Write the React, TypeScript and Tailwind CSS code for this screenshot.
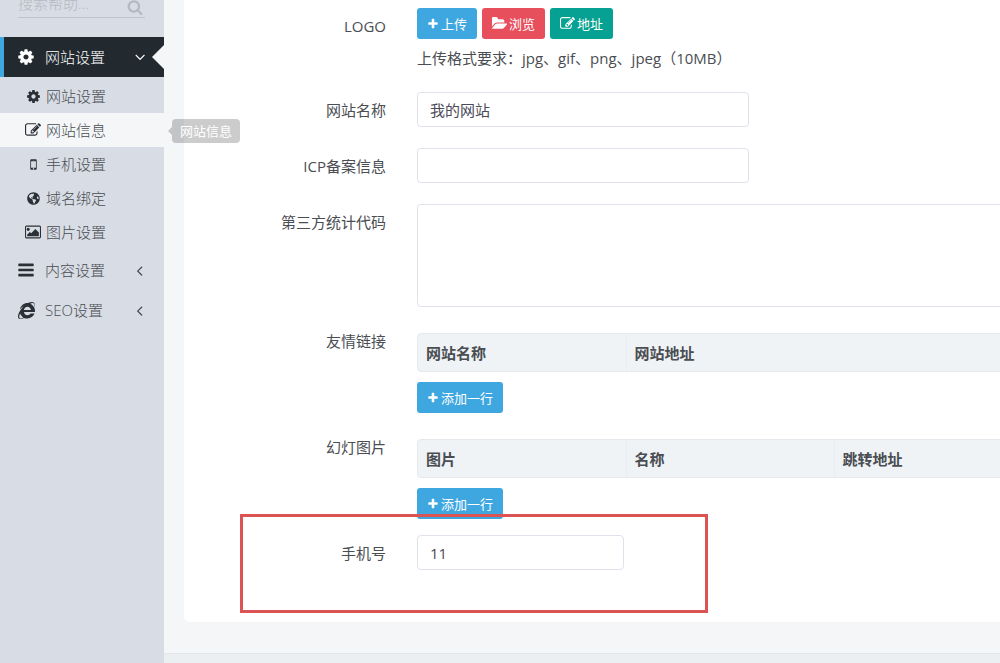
import { useState } from "react";
import type { ReactNode } from "react";
import { FaGlobeAmericas, FaInternetExplorer } from "react-icons/fa";
import clsx from "clsx";

const ICONS = {
  cog: "M1152 896q0-106-75-181t-181-75-181 75-75 181 75 181 181 75 181-75 75-181zm512-109v222q0 12-8 23t-20 13l-185 28q-19 54-39 91 35 50 107 138 10 12 10 25t-9 23q-27 37-99 108t-94 71q-12 0-26-9l-138-108q-44 23-91 38-16 136-29 186-7 28-36 28h-222q-14 0-24.5-8.5t-11.5-21.5l-28-184q-49-16-90-37l-141 107q-10 9-25 9-14 0-25-11-126-114-165-168-7-10-7-23 0-12 8-23 15-21 51-66.5t54-70.5q-27-50-41-99l-183-27q-13-2-21-12.5t-8-23.5v-222q0-12 8-23t19-13l186-28q14-46 39-92-40-57-107-138-10-12-10-24 0-10 9-23 26-36 98.5-107.5t94.5-71.5q13 0 26 10l138 107q44-23 91-38 16-136 29-186 7-28 36-28h222q14 0 24.5 8.5t11.5 21.5l28 184q49 16 90 37l142-107q9-9 24-9 13 0 25 10 129 119 165 170 7 8 7 22 0 12-8 23-15 21-51 66.5t-54 70.5q26 50 41 98l183 28q13 2 21 12.5t8 23.5z",
  edit: "M888 1184l116-116-152-152-116 116v56h96v96h56zm440-720q-16-16-33 1l-350 350q-17 17-1 33t33-1l350-350q17-17 1-33zm80 594v190q0 119-84.5 203.5t-203.5 84.5h-832q-119 0-203.5-84.5t-84.5-203.5v-832q0-119 84.5-203.5t203.5-84.5h832q63 0 117 25 15 7 18 23 3 17-9 29l-49 49q-14 14-32 8-23-6-45-6h-832q-66 0-113 47t-47 113v832q0 66 47 113t113 47h832q66 0 113-47t47-113v-126q0-13 9-22l64-64q15-15 35-7t20 29zm-96-738l288 288-672 672h-288v-288zm444 132l-92 92-288-288 92-92q28-28 68-28t68 28l152 152q28 28 28 68t-28 68z",
  mobile:
    "M976 1408q0-33-23.5-56.5t-56.5-23.5-56.5 23.5-23.5 56.5 23.5 56.5 56.5 23.5 56.5-23.5 23.5-56.5zm208-160v-704q0-13-9.5-22.5t-22.5-9.5h-512q-13 0-22.5 9.5t-9.5 22.5v704q0 13 9.5 22.5t22.5 9.5h512q13 0 22.5-9.5t9.5-22.5zm-192-848q0-16-16-16h-160q-16 0-16 16t16 16h160q16 0 16-16zm288-16v1024q0 52-38 90t-90 38h-512q-52 0-90-38t-38-90v-1024q0-52 38-90t90-38h512q52 0 90 38t38 90z",
  picture:
    "M576 576q0 80-56 136t-136 56-136-56-56-136 56-136 136-56 136 56 56 136zm1088 384v448h-1408v-192l320-320 160 160 512-512zm96-704h-1600q-13 0-22.5 9.5t-9.5 22.5v1216q0 13 9.5 22.5t22.5 9.5h1600q13 0 22.5-9.5t9.5-22.5v-1216q0-13-9.5-22.5t-22.5-9.5zm160 32v1216q0 66-47 113t-113 47h-1600q-66 0-113-47t-47-113v-1216q0-66 47-113t113-47h1600q66 0 113 47t47 113z",
  bars: "M1664 1344v128q0 26-19 45t-45 19h-1408q-26 0-45-19t-19-45v-128q0-26 19-45t45-19h1408q26 0 45 19t19 45zm0-512v128q0 26-19 45t-45 19h-1408q-26 0-45-19t-19-45v-128q0-26 19-45t45-19h1408q26 0 45 19t19 45zm0-512v128q0 26-19 45t-45 19h-1408q-26 0-45-19t-19-45v-128q0-26 19-45t45-19h1408q26 0 45 19t19 45z",
  search:
    "M1216 832q0-185-131.5-316.5t-316.5-131.5-316.5 131.5-131.5 316.5 131.5 316.5 316.5 131.5 316.5-131.5 131.5-316.5zm512 832q0 52-38 90t-90 38q-54 0-90-38l-343-342q-179 124-399 124-143 0-273.5-55.5t-225-150-150-225-55.5-273.5 55.5-273.5 150-225 225-150 273.5-55.5 273.5 55.5 225 150 150 225 55.5 273.5q0 220-124 399l343 343q37 37 37 90z",
  angle:
    "M1203 544q0 13-10 23l-393 393 393 393q10 10 10 23t-10 23l-50 50q-10 10-23 10t-23-10l-466-466q-10-10-10-23t10-23l466-466q10-10 23-10t23 10l50 50q10 10 10 23z",
  plus: "M1600 736v192q0 40-28 68t-68 28h-416v416q0 40-28 68t-68 28h-192q-40 0-68-28t-28-68v-416h-416q-40 0-68-28t-28-68v-192q0-40 28-68t68-28h416v-416q0-40 28-68t68-28h192q40 0 68 28t28 68v416h416q40 0 68 28t28 68z",
  folder:
    "M1815 952q0 31-31 66l-336 396q-43 51-120.5 86.5t-143.5 35.5h-1088q-34 0-60.5-13t-26.5-43q0-31 31-66l336-396q43-51 120.5-86.5t143.5-35.5h1088q34 0 60.5 13t26.5 43zm-343-344v160h-832q-94 0-197 47.5t-164 119.5l-337 396-5 6q0-4-.5-12.5t-.5-12.5v-960q0-92 66-158t158-66h320q92 0 158 66t66 158v32h544q92 0 158 66t66 158z",
};

type IconName = keyof typeof ICONS;

function Icon({ name, className }: { name: IconName; className?: string }) {
  return (
    <svg
      viewBox={name === "picture" ? "0 0 1920 1792" : "0 0 1792 1792"}
      fill="currentColor"
      aria-hidden="true"
      className={clsx("shrink-0", className)}
    >
      <path d={ICONS[name]} />
    </svg>
  );
}

const SUB_ITEMS: { label: string; icon: ReactNode }[] = [
  { label: "网站设置", icon: <Icon name="cog" className="size-[15px]" /> },
  { label: "网站信息", icon: <Icon name="edit" className="size-4" /> },
  { label: "手机设置", icon: <Icon name="mobile" className="size-[15px]" /> },
  { label: "域名绑定", icon: <FaGlobeAmericas className="size-[13px]" /> },
  { label: "图片设置", icon: <Icon name="picture" className="size-4" /> },
];

export default function App() {
  return (
    <div className="flex min-h-screen overflow-hidden bg-[#f4f6f8] font-['Open_Sans','Noto_Sans_CJK_SC',sans-serif] text-[15px] leading-[22px] text-[#4a4d52]">
      <Sidebar />
      <main className="flex min-w-0 flex-1 flex-col overflow-hidden">
        <div className="ml-5 min-w-[1000px] rounded-b-md bg-white pt-2 pb-[31px]">
          <SiteForm />
        </div>
        <footer className="mt-[31px] flex-1 border-t border-[#e3e7ea] bg-[#ebeff1]" />
      </main>
    </div>
  );
}

/* Sidebar */

function Sidebar() {
  return (
    <aside className="relative z-10 w-[164px] shrink-0 bg-[#d8dce4] font-light">
      <div className="flow-root h-[37px] pr-[19px] pl-[18px]">
        <div className="-mt-3 flex h-[30px] items-center border-b border-[#bfc4cc] text-[#b4b9c2]">
          <input
            type="text"
            aria-label="搜索帮助"
            placeholder="搜索帮助..."
            className="w-full min-w-0 bg-transparent outline-none placeholder:text-[#b4b9c2]"
          />
          <button type="button" aria-label="搜索" className="mt-2 mr-[2px]">
            <Icon name="search" className="size-4" />
          </button>
        </div>
      </div>

      <nav>
        <a
          href="#site"
          className="relative flex h-10 items-center border-l-4 border-[#3ea8df] bg-[#22292f] pl-[13px] text-white"
        >
          <Icon name="cog" className="size-[18px]" />
          <span className="ml-[10px] flex-1">网站设置</span>
          <Icon name="angle" className="mr-4 size-[17px] -rotate-90" />
          <span className="absolute top-2 right-0 border-y-12 border-r-12 border-y-transparent border-r-[#f4f6f8]" />
        </a>
        <ul className="pt-[2px] pb-[3px]">
          {SUB_ITEMS.map((item) => (
            <SubItem key={item.label} {...item} active={item.label === "网站信息"} />
          ))}
        </ul>
        <div className="flex flex-col gap-1">
          <MenuItem label="内容设置" icon={<Icon name="bars" className="size-[18px]" />} />
          <MenuItem label="SEO设置" icon={<FaInternetExplorer className="size-[17px]" />} />
        </div>
      </nav>
    </aside>
  );
}

function SubItem({ label, icon, active }: { label: string; icon: ReactNode; active: boolean }) {
  return (
    <li className="relative">
      <a
        href="#sub"
        className={clsx("flex h-[34px] items-center pl-6", active && "bg-[#f4f6f8]")}
      >
        <span className="flex w-[18px] justify-center text-[#2b3036]">{icon}</span>
        <span className="ml-1">{label}</span>
      </a>
      {active && (
        <span
          role="tooltip"
          className="absolute top-[6px] left-[172px] rounded bg-black/20 px-2 text-[13px] leading-6 font-normal whitespace-nowrap text-white"
        >
          <span className="absolute top-2 right-full border-y-4 border-r-4 border-y-transparent border-r-black/20" />
          {label}
        </span>
      )}
    </li>
  );
}

function MenuItem({ label, icon }: { label: string; icon: ReactNode }) {
  return (
    <a href="#menu" className="flex h-9 items-center pr-4 pl-[17px]">
      <span className="flex w-[18px] justify-center text-[#2b3036]">{icon}</span>
      <span className="ml-[10px] flex-1">{label}</span>
      <Icon name="angle" className="size-[17px]" />
    </a>
  );
}

/* Form */

const fieldClass =
  "mb-[5px] block rounded border border-[#dfe2ea] bg-white px-3 outline-none text-[#4a4a58]";

function SiteForm() {
  const [siteName, setSiteName] = useState("我的网站");
  const [phone, setPhone] = useState("11");

  return (
    <form>
      <Row label="LOGO">
        <div className="flex gap-[5px]">
          <Button icon="plus" color="bg-[#3fa7df]">上传</Button>
          <Button icon="folder" color="bg-[#e84f5c]">浏览</Button>
          <Button icon="edit" color="bg-[#06a192]">地址</Button>
        </div>
        <p className="mt-[7px] mb-[6px] leading-6">上传格式要求：jpg、gif、png、jpeg（10MB）</p>
      </Row>
      <Row label="网站名称" htmlFor="site-name">
        <input
          id="site-name"
          value={siteName}
          onChange={(e) => setSiteName(e.target.value)}
          className={clsx(fieldClass, "h-[35px] w-[332px]")}
        />
      </Row>
      <Row label="ICP备案信息" htmlFor="icp">
        <input id="icp" className={clsx(fieldClass, "h-[35px] w-[332px]")} />
      </Row>
      <Row label="第三方统计代码" htmlFor="stats">
        <textarea id="stats" className={clsx(fieldClass, "mb-0! h-[103px] w-full resize-none py-2")} />
      </Row>
      <Row label="友情链接">
        <HeadTable columns={["网站名称", "网站地址"]} />
        <Button icon="plus" color="bg-[#3fa7df]">添加一行</Button>
      </Row>
      <Row label="幻灯图片">
        <HeadTable columns={["图片", "名称", "跳转地址"]} />
        <Button icon="plus" color="bg-[#3fa7df]">添加一行</Button>
      </Row>
      <Row label="手机号" htmlFor="phone">
        <input
          id="phone"
          value={phone}
          onChange={(e) => setPhone(e.target.value)}
          className={clsx(fieldClass, "h-[35px] w-[207px]")}
        />
        <div className="pointer-events-none absolute -top-[21px] left-14 h-[99px] w-[468px] border-3 border-[#dc5353]" />
      </Row>
    </form>
  );
}

function Row({
  label,
  htmlFor,
  children,
}: {
  label: string;
  htmlFor?: string;
  children: ReactNode;
}) {
  const Tag = htmlFor ? "label" : "span";
  return (
    <div className="relative mb-4 grid grid-cols-[202px_1fr] gap-x-[31px]">
      <Tag htmlFor={htmlFor} className="pt-[7px] text-right">
        {label}
      </Tag>
      <div>{children}</div>
    </div>
  );
}

function Button({
  icon,
  color,
  children,
}: {
  icon: IconName;
  color: string;
  children: ReactNode;
}) {
  return (
    <button
      type="button"
      className={clsx(
        "flex h-[31px] items-center gap-[2px] rounded-[3px] px-[10px] text-[13px] leading-5 text-white",
        color,
      )}
    >
      <Icon name={icon} className={icon === "plus" ? "size-3" : "size-[15px]"} />
      {children}
    </button>
  );
}

function HeadTable({ columns }: { columns: string[] }) {
  return (
    <div className="my-[10px] overflow-hidden rounded border border-[#e5e9ee] bg-[#eff3f6]">
      <table className="w-full table-fixed">
        <thead>
          <tr>
            {columns.map((name, i) => (
              <th
                key={name}
                className={clsx(
                  "h-[37px] pl-2 text-left font-bold",
                  i < columns.length - 1 && "w-[208px] border-r border-[#e9edf1]",
                )}
              >
                {name}
              </th>
            ))}
          </tr>
        </thead>
      </table>
    </div>
  );
}
